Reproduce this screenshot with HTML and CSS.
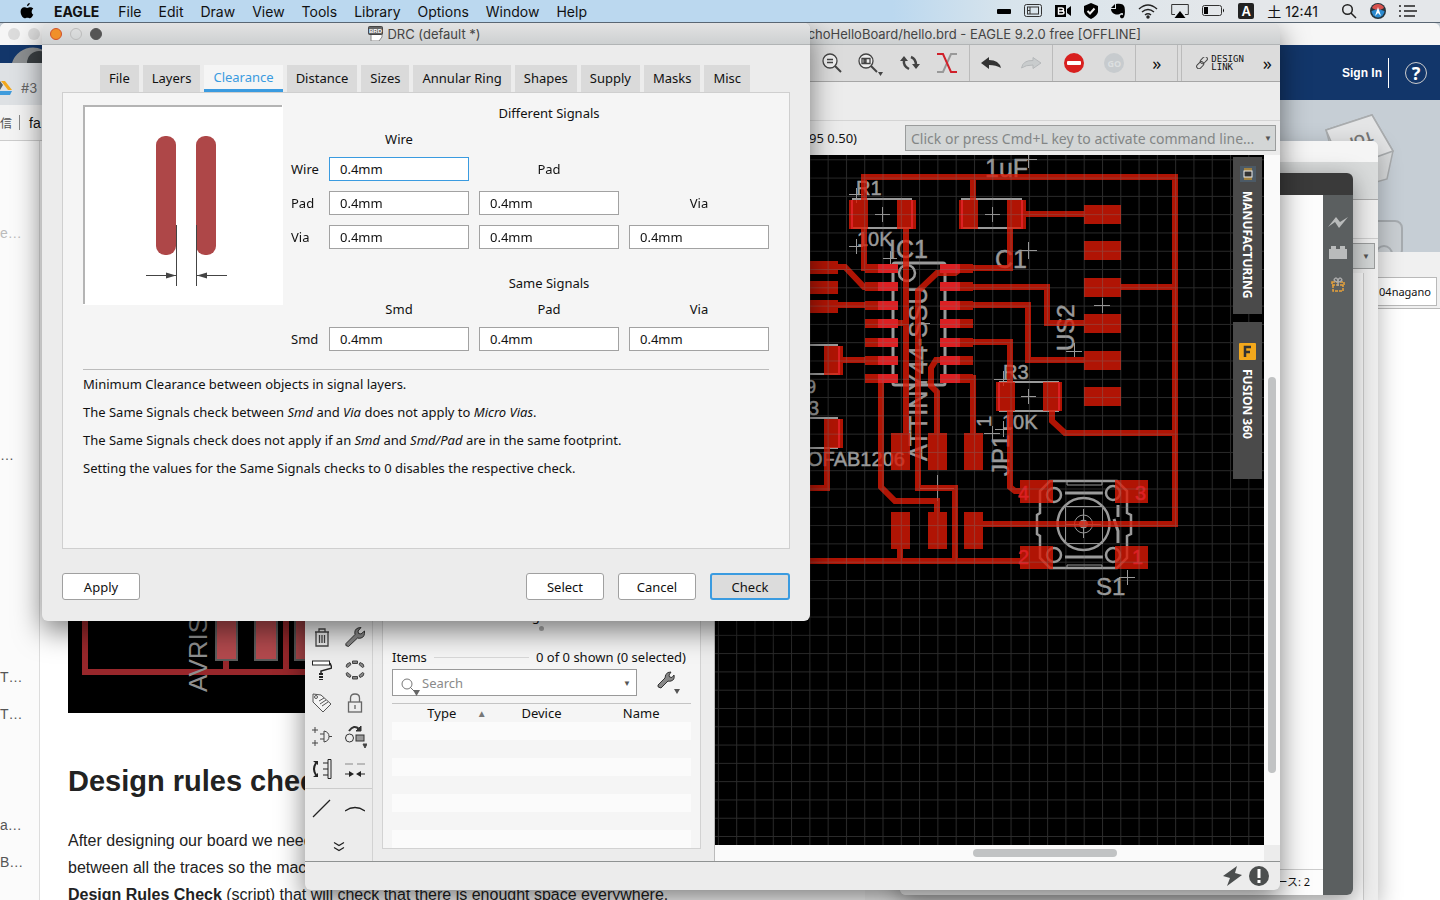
FILE: index.html
```html
<!DOCTYPE html>
<html lang="en">

<head>
    <meta charset="UTF-8">
    <meta name="viewport" content="width=device-width, initial-scale=1.0">
    <title>EAGLE - DRC</title>
    <link rel="stylesheet" href="styles.css">
</head>

<body>
    <div class="desktop">
        <nav class="menubar">
            <div class="menus">
                <svg class="apple" width="14" height="16" viewBox="0 0 14 16"><path d="M9.8 0c.1 1.500-1.200 3.100-2.800 3.200C6.900 1.600 8.300.2 9.800 0zM13.300 11.600c-.7 1.700-1.900 3.700-3.200 3.700-1 0-1.400-.6-2.700-.6s-1.700.6-2.700.6C2.700 15.300.6 11.900.6 8.600c0-2.700 1.700-4.400 3.600-4.400 1.200 0 2 .7 3 .7s1.700-.7 3.300-.7c1 0 2.100.5 2.800 1.500-2.300 1.400-2 4.900 0 5.900z"/></svg>
                <button class="app-name">EAGLE</button>
                <button>File</button>
                <button>Edit</button>
                <button>Draw</button>
                <button>View</button>
                <button>Tools</button>
                <button>Library</button>
                <button>Options</button>
                <button>Window</button>
                <button>Help</button>
            </div>
            <div class="tray">
                <svg width="14" height="16" viewBox="0 0 14 16"><rect y="6" width="14" height="5" rx="1"/></svg>
                <svg width="18" height="16" viewBox="0 0 18 16" fill="none" stroke="#333"><rect x=".5" y="1.500" width="17" height="12" rx="2"/><rect x="3.500" y="4" width="11" height="7"/><path d="M6 4v7M3 7.500h3"/></svg>
                <svg width="16" height="16" viewBox="0 0 16 16"><path d="M0 2h11v12H0zM12 6l4-3v10l-4-3z"/><path d="M3.500 5h3q2 0 2 1.500t-2 1.500h-3zm0 3h3.500q2 0 2 1.500T7 11H3.500z" fill="none" stroke="#fff" stroke-width="1.400"/></svg>
                <svg width="14" height="16" viewBox="0 0 14 16"><path d="M7 0l7 3v6q-1 4-7 7-6-3-7-7V3z"/><path d="M3.500 8l2.500 2.500 4.500-5" fill="none" stroke="#eee" stroke-width="2"/></svg>
                <svg width="14" height="16" viewBox="0 0 14 16"><path d="M0 5l4-4v4zM5 1c4-1 8 0 8.500 3s.8 7-.5 10c-1 2-4 1.500-4-.5s2-2 2.500-1.200c1-1 .5-2.300-.5-2.300-2 0-2 1.500-4 1.500C3 12 0 9 0 6h5z"/></svg>
                <svg width="20" height="16" viewBox="0 0 20 16" fill="none" stroke="#222" stroke-width="1.500"><path d="M1 6q9-8 18 0M4 9q6-5 12 0M7 12q3-2.500 6 0"/><circle cx="10" cy="14" r="1" fill="#222"/></svg>
                <svg width="18" height="16" viewBox="0 0 18 16"><path d="M4 11.500H.7v-10h16.600v10H14" fill="none" stroke="#333"/><path d="M3.500 15L9 8l5.500 7z"/></svg>
                <svg width="23" height="16" viewBox="0 0 23 16"><rect x=".5" y="2.500" width="19" height="10" rx="2" fill="none" stroke="#333"/><rect x="2" y="4" width="4" height="7"/><path d="M21 5.500q2 2 0 4z"/></svg>
                <span class="input-source">A</span>
                <span class="clock"><span lang="ja">土</span> 12:41</span>
                <svg width="16" height="16" viewBox="0 0 16 16" fill="none" stroke="#222" stroke-width="1.500"><circle cx="6.500" cy="6.500" r="4.800"/><path d="M10 10l5 5"/></svg>
                <svg width="16" height="16" viewBox="0 0 16 16"><circle cx="8" cy="8" r="8" fill="#26343c"/><path d="M2 5a6.500 6.500 0 0 1 12 0L8 8z" fill="#d8524e"/><path d="M1.500 8a6.500 6.500 0 0 0 13 0L8 6z" fill="#2c8bd0"/><path d="M5 13l3-9 3 9-3-3z" fill="#fff"/></svg>
                <svg width="18" height="16" viewBox="0 0 18 16" stroke="#222" stroke-width="1.500"><path d="M0 3h2M5 3h11M0 8h2M5 8h13M0 13h2M5 13h11"/></svg>
            </div>
        </nav>

        <!-- 3D modelling window -->
        <section class="window fusion">
            <div class="fusion-title"></div>
            <div class="fusion-bar">
                <a href="#" class="sign-in">Sign In</a>
                <button class="help" aria-label="Help">?</button>
            </div>
            <svg class="view-cube" width="160" height="155" viewBox="1280 100 160 155">
                <path d="M1326 130l46-15 21 36-6 28-28 8-20-10z" fill="#d8dadb" stroke="#a9acae" stroke-width="1.500"/>
                <path d="M1326 130l46-15 21 36-50 18z" fill="#e4e5e6" stroke="#a9acae" stroke-width="1.500"/>
                <text x="1371" y="131" transform="rotate(162 1371 131)" font-size="14" font-weight="bold" fill="#777">TOP</text>
                <rect x="1362" y="221" width="40" height="36" rx="7" fill="#c9ced2" stroke="#a6abaf" stroke-width="2"/>
                <circle cx="1384" cy="254" r="8" fill="none" stroke="#a6abaf" stroke-width="2"/>
            </svg>
        </section>

        <section class="window files">
            <div class="files-tab">.104nagano</div>
            <div class="files-body"></div>
        </section>

        <section class="window schematic">
            <div class="schematic-title"></div>
            <div class="schematic-tools"></div>
            <div class="schematic-row"></div>
            <div class="schematic-command">
                <select aria-label="Schematic command"><option></option></select>
            </div>
            <div class="schematic-body"></div>
        </section>

        <section class="window editor">
            <div class="editor-title"></div>
            <div class="editor-main">
                <div class="editor-page">
                    <div class="editor-status" lang="ja">ース: 2</div>
                </div>
                <div class="editor-side">
                    <svg width="20" height="12" viewBox="0 0 20 12" fill="#b9bbbb"><path d="M0 11L8 1l4 5 8-5-9 11-4-6z"/></svg>
                    <svg width="18" height="13" viewBox="0 0 18 13" fill="#b9bbbb"><path d="M0 3h2V0h5v3h4V0h5v3h2v10H0z"/></svg>
                    <svg width="16" height="16" viewBox="0 0 16 16" fill="none" stroke-width="1.500"><path d="M2 5h12v3H2zM3 8v6h10V8M5 14h6" stroke="#e9a23a" stroke-dasharray="3 1"/><path d="M8 5C5 5 3 3 5 1.500S8 3 8 5c0-2 1-5 3-3.500S11 5 8 5M8 5v4" stroke="#aaa"/></svg>
                </div>
            </div>
        </section>

        <section class="window browser">
            <div class="browser-title"><i></i><i></i></div>
            <div class="browser-strip">
                <svg width="42" height="18" viewBox="0 0 42 18"><path d="M12 18a22 22 0 0 1 42 0z" fill="#8c8f91"/><path d="M27 18a12 12 0 0 1 24 0z" fill="#3b4044"/></svg>
            </div>
            <div class="browser-tabs">
                <svg width="13" height="14" viewBox="0 0 13 14"><path d="M1 0h4l7 9H8z" fill="#f3a81c"/><path d="M0 0l3 4-3 5z" fill="#576066"/><path d="M0 10h12l-2 4H0z" fill="#3e9bdc"/></svg>
                <span>#3</span>
            </div>
            <div class="browser-bookmarks"><span lang="ja">信</span><i></i><a href="#">fa</a></div>
            <div class="browser-main">
                <ul class="toc">
                    <li class="dim"><a href="#">e…</a></li>
                    <li></li><li></li><li></li><li></li><li></li>
                    <li><a href="#">…</a></li>
                    <li></li><li></li><li></li><li></li><li></li>
                    <li><a href="#">T…</a></li>
                    <li><a href="#">T…</a></li>
                    <li></li><li></li>
                    <li><a href="#">a…</a></li>
                    <li><a href="#">B…</a></li>
                </ul>
                <article class="article">
                    <svg class="article-board" width="500" height="572" viewBox="68 141 500 572">
                        <rect x="68" y="141" width="500" height="572"/>
                        <g fill="none" stroke="#98272b" stroke-width="6"><path d="M85 560v112h300M286 560v112M226 650v22"/></g>
                        <g fill="#b2494d" stroke="#5b5b5b" stroke-width="2"><path d="M216 560h21v100h-21zM255 560h22v100h-22zM295 560h22v100h-22z"/></g>
                        <text x="207" y="692" transform="rotate(-90 207 692)" font-size="26" fill="#8f8f8f">AVRISP</text>
                    </svg>
                    <h2>Design rules check</h2>
                    <p>After designing our board we need to check that<br>between all the traces so the machine can mill<br><b>Design Rules Check</b> (script) that will check that there is enought space everywhere.</p>
                </article>
            </div>
        </section>

        <!-- Board editor -->
        <section class="window eagle">
            <header class="titlebar eagle-title">EchoHelloBoard/hello.brd - EAGLE 9.2.0 free [OFFLINE]</header>
            <div class="toolbar">
                <div class="tool-group view-tools">
                    <button aria-label="Zoom out"><svg width="20" height="20" viewBox="0 0 20 20" fill="none" stroke="#444" stroke-width="1.300"><circle cx="8" cy="8" r="7" fill="#eee"/><path d="M5 6.500h6M5 9.500h6"/><path d="M13 13l6 6" stroke-width="2"/></svg></button>
                    <button aria-label="Zoom select"><svg width="26" height="26" viewBox="0 -3 26 26" fill="none" stroke="#444" stroke-width="1.300"><circle cx="8" cy="8" r="7" fill="#eee"/><path d="M4 5.500h8v5H4zM6 7h2v2H6z"/><path d="M13 13l6 6" stroke-width="2"/><path d="M20 19h5l-2.500 4z" fill="#444" stroke="none"/></svg></button>
                    <button aria-label="Redraw"><svg width="20" height="18" viewBox="0 0 20 18" fill="none" stroke="#444" stroke-width="2.500"><path d="M4 6q-1 6 5 9M11 3q5 2 5 8"/><path d="M0 7l4-5 4 5zM12 10h8l-4 5z" fill="#444" stroke="none"/></svg></button>
                    <button aria-label="Ratsnest"><svg width="22" height="22" viewBox="0 0 22 22" fill="none" stroke-width="2"><path d="M1 20h6L15 2h6" stroke="#999"/><path d="M1 2h6l8 18h6" stroke="#d0202a"/></svg></button>
                </div>
                <div class="tool-group">
                    <button aria-label="Undo"><svg width="20" height="12" viewBox="0 0 20 12" fill="#333"><path d="M0 6l8-6v3q10 0 12 8-5-3-12-3v4z"/></svg></button>
                    <button aria-label="Redo"><svg width="20" height="12" viewBox="0 0 20 12" fill="#c9cccd" stroke="#b5b8ba"><path d="M20 6l-8-5.500v3Q2 3 .5 11q4-3 11.500-3v3.500z"/></svg></button>
                </div>
                <div class="tool-group">
                    <button aria-label="Stop"><svg width="20" height="20" viewBox="0 0 20 20"><circle cx="10" cy="10" r="10" fill="#d8201f"/><rect x="3" y="8" width="14" height="4" rx="1" fill="#fff"/></svg></button>
                    <button class="go">GO</button>
                </div>
                <div class="tool-group more"><button>»</button></div>
                <div class="tool-group link">
                    <button class="design-link"><svg width="12" height="12" viewBox="0 0 12 12" fill="none" stroke="#444"><rect x="4.500" y="1" width="8" height="4.500" rx="2.200" transform="rotate(-45 8 4)"/><rect x="0" y="6" width="8" height="4.500" rx="2.200" transform="rotate(-45 4 8)"/></svg><span>DESIGN<br>LINK</span></button>
                    <button>»</button>
                </div>
            </div>
            <div class="parameter-bar"></div>
            <div class="command-bar">
                <span class="coords">95 0.50)</span>
                <select class="command" aria-label="Command line"><option>Click or press Cmd+L key to activate command line...</option></select>
            </div>
            <div class="eagle-main">
                <aside class="palette">
                    <div class="palette-grid">
                        <button aria-label="Delete"><svg width="20" height="20" viewBox="0 0 20 20" fill="none" stroke="#444" stroke-width="1.300"><path d="M3 5h14M7 5V2h6v3M4 5v14h12V5M7.500 8v8M10 8v8M12.500 8v8"/></svg></button>
                        <button aria-label="Properties"><svg width="20" height="20" viewBox="0 0 20 20" fill="#888" stroke="#333"><path d="M1 16.500l9-9q-1-5 3-6.500l3-.5-3 3.500.5 2.500L16 7l3.500-3q.5 6-3.500 7-2 .5-3.500 0l-9 8.500q-4-.5-2.500-3z"/></svg></button>
                        <button aria-label="Paint"><svg width="20" height="20" viewBox="0 0 20 20" fill="none" stroke="#222"><rect x=".5" y="1" width="17" height="4" fill="#fff"/><path d="M18 3l2 5-11 3v2" stroke-width="1.500"/><path d="M9 13v7" stroke-width="4" stroke-dasharray="2 1"/></svg></button>
                        <button aria-label="Group"><svg width="20" height="20" viewBox="0 0 20 20" fill="#888" stroke="#444"><path d="M7.500 1h5v2.500h-5zM7.500 16.500h5V19h-5zM2 4l3-1.500 1 2L2.500 7.500 1 6.500zM18 4l-3-1.500-1 2 3.500 3L19 6.500zM2 16l3 1.500 1-2-3.500-3L1 13.500zM18 16l-3 1.500-1-2 3.500-3 1.500 1z"/></svg></button>
                        <button aria-label="Name"><svg width="20" height="20" viewBox="0 0 20 20" fill="#f4f4f4" stroke="#555"><path d="M1 1l8 1 10 9-8 8L1 9z"/><circle cx="4" cy="4" r="1.500"/><path d="M7 8l5-3M8 11l6-4M10 13l6-4"/></svg></button>
                        <button aria-label="Lock"><svg width="20" height="20" viewBox="0 0 20 20" fill="none" stroke="#666" stroke-width="1.300"><rect x="3.500" y="9" width="13" height="10"/><path d="M5.500 9V5q0-4 4.500-4t4.500 4v4M10 12v4"/></svg></button>
                        <button aria-label="Gate swap"><svg width="20" height="20" viewBox="0 0 20 20" fill="none" stroke="#444"><path d="M0 4h6M3 1v6M0 17h6M3 14v6M12 5v11q5-1 5-5.500T12 5zM8 8h4M8 13h4M17 10.500h3"/></svg></button>
                        <button aria-label="Replace"><svg width="24" height="26" viewBox="-2 -3 24 26" fill="none" stroke="#333"><path d="M4 5q5-7 10-2" stroke-width="2"/><path d="M11 5h5V0z" fill="#333"/><circle cx="4.500" cy="12" r="4"/><rect x="11" y="9" width="8" height="6" fill="#999"/><path d="M18 18h4l-2 4z" fill="#444" stroke="#444"/></svg></button>
                        <button aria-label="Pin swap"><svg width="20" height="20" viewBox="0 0 20 20" fill="none" stroke="#222"><path d="M4 4q-4 6 0 12" stroke-width="2"/><path d="M1 2h5v4zM1 18h5v-4z" fill="#222" stroke="none"/><path d="M16 .5h3v19h-3zM11 4h5M11 10h5M11 16h5"/></svg></button>
                        <button aria-label="Miter"><svg width="20" height="20" viewBox="0 0 20 20" fill="none" stroke="#222"><path d="M0 5h8M12 5h8" stroke="#888"/><path d="M0 15h5M15 15h5"/><path d="M4 12l5 3-5 3zM16 12l-5 3 5 3z" fill="#222" stroke="none"/></svg></button>
                    </div>
                    <div class="palette-grid palette-lines">
                        <button aria-label="Line"><svg width="20" height="20" viewBox="0 0 20 20" stroke="#222" stroke-width="1.300"><path d="M1 18L18 1"/></svg></button>
                        <button aria-label="Arc"><svg width="20" height="20" viewBox="0 0 20 20" fill="none" stroke="#222" stroke-width="1.300"><path d="M0 12q10-7 20 0"/></svg></button>
                    </div>
                    <button class="palette-more" aria-label="More tools"><svg width="12" height="12" viewBox="0 0 12 12" fill="none" stroke="#222" stroke-width="1.300"><path d="M1 1.500l5 3 5-3M1 6.500l5 3 5-3"/></svg></button>
                </aside>
                <aside class="inspector">
                    <div class="inspector-cut"><span>AD1</span><span>g</span><span>0.7 24</span></div>
                    <div class="grip"></div>
                    <div class="items-head"><span>Items</span><hr><span>0 of 0 shown (0 selected)</span></div>
                    <div class="search-row">
                        <div class="search">
                            <svg width="20" height="18" viewBox="0 0 20 18" fill="none" stroke="#777"><circle cx="6" cy="6" r="5"/><path d="M9 9l4 4"/><path d="M12 12h7l-3.500 6z" fill="#666" stroke="none"/></svg>
                            <input type="text" aria-label="Search items" placeholder="Search">
                            <span class="arrow">▼</span>
                        </div>
                        <button aria-label="Item options"><svg width="24" height="24" viewBox="0 0 24 24" fill="#888" stroke="#333"><path d="M1 14l7-7q0-4 3-5.500L14 1l-2 3 .5 2 2.500.5 2-2.500q1 5-3 6-2 .5-3 0l-7 7q-4-.5-3-3z"/><path d="M17 18h6l-3 5z" fill="#555" stroke="none"/></svg></button>
                    </div>
                    <table class="items">
                        <thead><tr><th>Type <i>▲</i></th><th>Device</th><th>Name</th></tr></thead>
                        <tbody>
                            <tr><td colspan="3"></td></tr><tr><td colspan="3"></td></tr><tr><td colspan="3"></td></tr><tr><td colspan="3"></td></tr>
                            <tr><td colspan="3"></td></tr><tr><td colspan="3"></td></tr><tr><td colspan="3"></td></tr>
                        </tbody>
                    </table>
                </aside>
                <div class="board-area">
                    <div class="board-view">
                        <svg class="board" viewBox="715 155 549 690" preserveAspectRatio="xMinYMin slice">
                            <defs>
                                <pattern id="grid" x="717.900" y="159.300" width="18.290" height="18.290" patternUnits="userSpaceOnUse"><path d="M0 .5h19M.5 0v19" stroke="#777" stroke-opacity=".36" fill="none"/></pattern>
                            </defs>
                            <rect x="715" y="155" width="549" height="690"/>
                            <!-- silkscreen -->
                            <g class="silk">
                                <path d="M852 199h60M852 228h60M961 199h61M961 228h61M810 345h28M810 374h28M810 418h28M810 448h28M999 382h60M999 411h60" stroke-width="2"/>
                                <rect x="893" y="263" width="52" height="122" rx="2" stroke-width="3"/>
                                <circle cx="907" cy="273" r="8" stroke-width="2.500"/>
                                <circle cx="1083.500" cy="524" r="26" stroke-width="2.500"/>
                                <circle cx="1083.500" cy="524" r="9"/><circle cx="1083.500" cy="524" r="4" fill="#9a9a9a"/>
                                <rect x="1065.500" y="506.500" width="37" height="37"/>
                                <path d="M1065 493h38M1065 557h38M1118 505v12M1114 519l4 12v12" stroke-width="3"/>
                                <path d="M1050 481h67l10 10v22l4 2v19l-4 2v22l-10 10h-67l-10-10v-22l-3-2v-19l3-2v-22z" stroke-width="2.500"/>
                                <path d="M1067 482v3h35v-3M1067 568v-3h35v3"/>
                                <circle cx="1054" cy="495" r="7" stroke-width="2.500"/><circle cx="1113" cy="493" r="7" stroke-width="2.500"/>
                                <circle cx="1054" cy="555" r="7" stroke-width="2.500"/><circle cx="1113" cy="555" r="7" stroke-width="2.500"/>
                                <path d="M875 214.500h15M882.500 207v15M985 214.500h15M992.500 207v15M1021 396.500h15M1028.500 389v15M849 194.500h14M856.500 188v15M849 246.500h14M856.500 239v15M883 258.500h14M890.500 251v15M1020 159.500h17M1028.500 151v17M1020 250.500h17M1028.500 242v17M1094 305.500h16M1102.500 298v15M1066 351.500h16M1074.500 343v14M920 488.500h34M937.500 475v26M920 323.500h10M994 379.500h16M1003.500 371v15M984 433.500h16M992.500 426v15M995 429.500h16M1003.500 421v16M1119 577.500h16M1127.500 570v15M1066 524.500h35M1083.500 509v29"/>
                                <g class="silk-text">
                                    <text x="985" y="177" font-size="25">1uF</text>
                                    <text x="856" y="195" font-size="20">R1</text>
                                    <text x="857" y="246" font-size="20">10K</text>
                                    <text x="889" y="258" font-size="25">IC1</text>
                                    <text x="995" y="268" font-size="25">C1</text>
                                    <text x="1003" y="379" font-size="20">R3</text>
                                    <text x="1002" y="429" font-size="20">10K</text>
                                    <text x="1096" y="595" font-size="24">S1</text>
                                    <text x="806" y="393" font-size="18">9</text>
                                    <text x="808" y="415" font-size="20">3</text>
                                    <text x="807" y="466" font-size="20">OFAB1206</text>
                                    <text transform="translate(1074 351) rotate(-90)" font-size="24">US2</text>
                                    <text transform="translate(1009 476) rotate(-90)" font-size="24">JP1</text>
                                    <text transform="translate(991 427) rotate(-90)" font-size="20">1</text>
                                    <text transform="translate(927 461) rotate(-90)" font-size="25">ATTINY44-SSU</text>
                                </g>
                            </g>
                            <!-- copper -->
                            <g class="copper">
                                <g class="traces">
                                    <path d="M893 268h-29v-91h311v347H980M973 177v25M906 228v212M1026 214h60M1010 228v40h-50M1120 287h55"/>
                                    <path d="M836 267h9l19 20h5M836 305h32M840 360h28M827 445v43h-17M890 323h16"/>
                                    <path d="M970 287h77v36h38M970 305h58v55h58M970 342h40v145l5 4h8M970 378h3v60M959 270l-4 3h-18l-19 18v197h37v75"/>
                                    <path d="M941 360h-5l-5 8v18l6 6v46M881 378v109l14 14h42v15M900 545v16M810 561h213M1052 408v13l13 12h110"/>
                                </g>
                                <path d="M849 200h19v29h-19zM897 200h19v29h-19zM959 200h19v29h-19zM1007 200h19v29h-19zM996 382h19v29h-19zM1043 382h19v29h-19zM824 346h19v29h-19zM824 419h19v29h-19z"/>
                                <path d="M810 261h28v13h-28zM810 281h28v13h-28zM810 300h28v13h-28zM1084 205h37v19h-37zM1084 241h37v19h-37zM1084 278h37v19h-37zM1084 314h37v19h-37zM1084 351h37v19h-37zM1084 387h37v19h-37z"/>
                                <path d="M891 433h19v37h-19zM928 433h19v37h-19zM964 433h19v37h-19zM891 512h19v37h-19zM928 512h19v37h-19zM964 512h19v37h-19zM1020 480h33v23h-33zM1020 546h33v23h-33zM1115 480h33v23h-33zM1115 546h33v23h-33z"/>
                                <path d="M865 264h33v9h-33zM865 282h33v9h-33zM865 301h33v9h-33zM865 319h33v9h-33zM865 338h33v9h-33zM865 356h33v9h-33zM865 374h33v9h-33zM940 264h33v9h-33zM940 282h33v9h-33zM940 301h33v9h-33zM940 319h33v9h-33zM940 338h33v9h-33zM940 356h33v9h-33zM940 374h33v9h-33z"/>
                            </g>
                            <path d="M878 264h20v9h-20zM878 282h20v9h-20zM878 301h20v9h-20zM878 319h20v9h-20zM878 338h20v9h-20zM878 356h20v9h-20zM878 374h20v9h-20zM940 264h20v9h-20zM940 282h20v9h-20zM940 301h20v9h-20zM940 319h20v9h-20zM940 338h20v9h-20zM940 356h20v9h-20zM940 374h20v9h-20z" fill="#dc2023"/>
                            <path d="M852 200v29M912 200v29M962 200v29M1022 200v29M999 382v29M1059 382v29M839 346v29M839 419v29" stroke="#dc2023" stroke-width="2"/>
                            <g class="pad-names"><text x="1018" y="500">4</text><text x="1135" y="500">3</text><text x="1018" y="564">2</text><text x="1132" y="564">1</text></g>
                            <rect x="715" y="155" width="549" height="690" fill="url(#grid)"/>
                        </svg>
                        <div class="side-tabs">
                            <button class="side-tab"><svg width="16" height="16" viewBox="0 0 16 16"><rect width="16" height="16" fill="#4c5a66"/><path d="M5 2v12M7 2v12M9 2v12M11 2v12" stroke="#f3a81c"/><rect x="4" y="5" width="8" height="6" fill="#333" stroke="#eee"/></svg><span>MANUFACTURING</span></button>
                            <button class="side-tab"><svg width="17" height="17" viewBox="0 0 17 17"><rect width="17" height="17" rx="1" fill="#f3a81c"/><path d="M6 14V4h6M6 9h5" fill="none" stroke="#333" stroke-width="2.500"/></svg><span>FUSION 360</span></button>
                        </div>
                        <div class="vscroll"><i></i></div>
                    </div>
                    <div class="hscroll"><i></i></div>
                </div>
            </div>
            <footer class="statusbar">
                <svg width="20" height="20" viewBox="0 0 20 20" fill="#4b4e4e"><path d="M14 0L0 10l7 2-3 8L19 9l-7-2z"/></svg>
                <svg width="20" height="20" viewBox="0 0 20 20"><circle cx="10" cy="10" r="10" fill="#4b4e4e"/><path d="M10 3v9M10 14v3" stroke="#fff" stroke-width="3"/></svg>
            </footer>
        </section>

        <!-- Design rule check dialog -->
        <section class="window dialog">
            <header class="titlebar dialog-title">
                <div class="lights"><i class="close"></i><i class="min"></i><i class="max"></i></div>
                <div class="dialog-name">
                    <svg width="16" height="15" viewBox="0 0 16 15"><path d="M3 6h11v5l-3 4H3z" fill="#fff" stroke="#888"/><rect x=".5" y=".5" width="14" height="8" rx="1" fill="#666" stroke="#444"/><text x="1" y="7" font-size="6" font-weight="bold" fill="#fff">BRD</text></svg>
                    <span>DRC (default *)</span>
                </div>
            </header>
            <form class="dialog-body">
                <div class="tabs">
                    <button type="button">File</button>
                    <button type="button">Layers</button>
                    <button type="button" class="active">Clearance</button>
                    <button type="button">Distance</button>
                    <button type="button">Sizes</button>
                    <button type="button">Annular Ring</button>
                    <button type="button">Shapes</button>
                    <button type="button">Supply</button>
                    <button type="button">Masks</button>
                    <button type="button">Misc</button>
                </div>
                <div class="pane">
                    <div class="clearance">
                        <svg class="preview" width="200" height="200" viewBox="83 105 200 200">
                            <rect x="83" y="105" width="200" height="200" fill="#fff"/>
                            <path d="M84 304V106h198" fill="none" stroke="#b4b4b4" stroke-width="2"/>
                            <rect x="156" y="136" width="20" height="119" rx="9" fill="#ae4748"/>
                            <rect x="196" y="136" width="20" height="119" rx="9" fill="#ae4748"/>
                            <path d="M176.500 225v61M196.500 225v61M146 275.500h30M197 275.500h30" stroke="#444"/>
                            <path d="M166 272.500l10 3-10 3zM207 272.500l-10 3 10 3z" fill="#444"/>
                        </svg>
                        <div class="signals">
                            <h3>Different Signals</h3>
                            <span class="col-label first-col">Wire</span>
                            <label class="row-label" for="wire-wire">Wire</label>
                            <input id="wire-wire" class="focused" type="text" value="0.4mm" autofocus>
                            <span class="col-label">Pad</span>
                            <label class="row-label" for="pad-wire">Pad</label>
                            <input id="pad-wire" type="text" value="0.4mm">
                            <input aria-label="Pad to pad" type="text" value="0.4mm">
                            <span class="col-label">Via</span>
                            <label class="row-label" for="via-wire">Via</label>
                            <input id="via-wire" type="text" value="0.4mm">
                            <input aria-label="Via to pad" type="text" value="0.4mm">
                            <input aria-label="Via to via" type="text" value="0.4mm">
                            <h3 class="same">Same Signals</h3>
                            <span class="col-label first-col">Smd</span>
                            <span class="col-label">Pad</span>
                            <span class="col-label">Via</span>
                            <label class="row-label" for="smd-smd">Smd</label>
                            <input id="smd-smd" type="text" value="0.4mm">
                            <input aria-label="Smd to pad" type="text" value="0.4mm">
                            <input aria-label="Smd to via" type="text" value="0.4mm">
                        </div>
                    </div>
                    <div class="notes">
                        <p>Minimum Clearance between objects in signal layers.</p>
                        <p>The Same Signals check between <em>Smd</em> and <em>Via</em> does not apply to <em>Micro Vias</em>.</p>
                        <p>The Same Signals check does not apply if an <em>Smd</em> and <em>Smd/Pad</em> are in the same footprint.</p>
                        <p>Setting the values for the Same Signals checks to 0 disables the respective check.</p>
                    </div>
                </div>
                <div class="actions">
                    <button type="button" class="apply">Apply</button>
                    <button type="button">Select</button>
                    <button type="button">Cancel</button>
                    <button type="button" class="primary">Check</button>
                </div>
            </form>
        </section>
    </div>
</body>

</html>
```
FILE: styles.css
```css
* {
    margin: 0;
    padding: 0;
    box-sizing: border-box;
}

body {
    font-family: "Noto Sans", sans-serif;
    font-size: 13px;
    color: #111;
}

button,
input,
select {
    font: inherit;
    color: inherit;
    border: none;
    background: none;
    border-radius: 0;
    outline: none;
}

a {
    color: inherit;
    text-decoration: none;
}

svg {
    display: block;
    flex: none;
}

.desktop {
    position: relative;
    height: 100vh;
    overflow: hidden;
    background: #c5cdd4;
}

/* Menu bar */

.menubar {
    position: relative;
    z-index: 10;
    display: flex;
    justify-content: space-between;
    height: 23px;
    padding: 0 23px 0 20px;
    border-bottom: 1px solid #596673;
    background: linear-gradient(90deg, #bbd8ef 62%, #d8e4ec 70%, #e4e7ea 85%);
    font-family: Inter, sans-serif;
    font-size: 14px;
}

.menus,
.tray {
    display: flex;
    align-items: center;
    white-space: nowrap;
}

.menus {
    gap: 17px;
}

.app-name {
    margin: 0 2px 0 3px;
    font-weight: 700;
}

.tray {
    gap: 13px;
}

.input-source {
    width: 16px;
    height: 16px;
    border-radius: 2px;
    background: #222;
    color: #fff;
    font-size: 13px;
    font-weight: 600;
    line-height: 16px;
    text-align: center;
}

.clock {
    padding: 0 10px 0 0;
}

[lang="ja"] {
    font-family: "Noto Sans", "Noto Sans CJK JP", sans-serif;
}

.window {
    position: absolute;
    overflow: hidden;
    display: flex;
    flex-direction: column;
}

.titlebar {
    display: flex;
    align-items: center;
    height: 22px;
    flex: none;
    border-bottom: 1px solid #b1b4b5;
    background: linear-gradient(#e3e3e3, #cdd0d1);
    font-family: Inter, sans-serif;
    font-size: 13px;
    color: #444;
}

/* Windows at the back */

.fusion {
    top: 23px;
    right: 0;
    bottom: 0;
    left: 865px;
    border-radius: 0 6px 0 0;
    background: #c6ced5;
}

.fusion-title {
    height: 22px;
    background: #f6f6f6;
}

.fusion-bar {
    display: flex;
    justify-content: flex-end;
    align-items: center;
    height: 55px;
    padding-right: 13px;
    background: #12366a;
    color: #fff;
}

.sign-in {
    padding: 5px 6px 5px 0;
    border-right: 1px solid #fff;
    font-family: "Liberation Sans", sans-serif;
    font-size: 12px;
    font-weight: 700;
    line-height: 20px;
}

.help {
    width: 22px;
    height: 22px;
    margin-left: 16px;
    border: 1px solid #ccc;
    border-radius: 50%;
    font-size: 18px;
    font-weight: 700;
    line-height: 20px;
}

.view-cube {
    align-self: flex-end;
    font-family: "Liberation Sans", sans-serif;
}

.files {
    top: 252px;
    right: 0;
    bottom: 0;
    left: 1270px;
    padding-top: 25px;
    background: #f0f0f0;
}

.files-tab {
    width: 167px;
    height: 29px;
    padding-right: 5px;
    border: 1px solid #b9b9b9;
    background: #fff;
    font-size: 11px;
    line-height: 28px;
    text-align: right;
}

.files-body {
    flex: 1;
    margin-top: 2px;
    border-top: 1px solid #b9b9b9;
    background: #fff;
}

.schematic {
    top: 141px;
    right: 62px;
    bottom: 0;
    left: 865px;
    border-radius: 6px 6px 0 0;
    background: #eee;
    box-shadow: 0 8px 24px rgba(0, 0, 0, .3);
}

.schematic-title {
    height: 21px;
    background: #f5f5f5;
}

.schematic-tools {
    height: 38px;
    border-bottom: 1px solid #aaa;
    background: #d9dbdb;
}

.schematic-row {
    height: 39px;
    border-bottom: 1px solid #ccc;
}

.schematic-command {
    display: flex;
    justify-content: flex-end;
    padding: 4px 3px;
}

.schematic-command select,
.command {
    appearance: none;
    border: 1px solid #9a9c9c;
    background: #d3d6d6;
}

.schematic-command select {
    width: 200px;
    height: 26px;
}

.schematic-command,
.command-bar {
    position: relative;
}

.schematic-command::after,
.command-bar::after {
    content: "▼";
    position: absolute;
    top: 11px;
    right: 8px;
    font-size: 8px;
    line-height: 12px;
    color: #555;
}

.schematic-body {
    flex: 1;
    margin-right: 14px;
    border-right: 1px solid #ccc;
    background: #f8f8f8;
}

.editor {
    top: 173px;
    right: 87px;
    bottom: 5px;
    left: 900px;
    border-radius: 6px;
    box-shadow: 0 6px 24px rgba(0, 0, 0, .4);
}

.editor-title {
    height: 22px;
    background: #3a3a3a;
}

.editor-main {
    display: flex;
    flex: 1;
}

.editor-page {
    flex: 1;
    display: flex;
    flex-direction: column;
    justify-content: flex-end;
    background: #fdfdfd;
}

.editor-status {
    height: 26px;
    padding-right: 13px;
    border-top: 1px solid #ccc;
    font-size: 11px;
    line-height: 24px;
    text-align: right;
}

.editor-side {
    display: flex;
    flex-direction: column;
    align-items: center;
    gap: 18px;
    width: 30px;
    padding-top: 21px;
    background: #5b5f60;
}

/* Web browser */

.browser {
    top: 23px;
    bottom: 0;
    left: 0;
    width: 865px;
    border-radius: 6px 0 0 0;
    background: #fff;
}

.browser-title {
    display: flex;
    align-items: center;
    gap: 8px;
    height: 22px;
    flex: none;
    padding-left: 8px;
    background: #f6f6f6;
}

.browser-title i {
    width: 12px;
    height: 12px;
    border-radius: 50%;
    background: #dcdcdc;
}

.browser-strip {
    height: 18px;
    flex: none;
    background: #12366a;
}

.browser-tabs {
    display: flex;
    align-items: center;
    gap: 8px;
    height: 42px;
    flex: none;
    padding-top: 8px;
    background: #dee1e4;
    font-family: Inter, sans-serif;
    font-size: 13px;
    color: #666;
}

.browser-bookmarks {
    display: flex;
    align-items: center;
    height: 36px;
    flex: none;
    border-bottom: 1px solid #ccc;
    background: #f3f3f3;
    font-family: "Liberation Sans", sans-serif;
    font-size: 14px;
}

.browser-bookmarks span {
    font-size: 12px;
    color: #555;
}

.browser-bookmarks i {
    width: 1px;
    height: 15px;
    margin: 0 9px 0 7px;
    background: #888;
}

.browser-main {
    display: flex;
    flex: 1;
    min-height: 0;
}

.toc {
    width: 40px;
    flex: none;
    padding-top: 74px;
    border-right: 1px solid #ddd;
    list-style: none;
    background: #fbfbfb;
    font-family: "Liberation Sans", sans-serif;
    font-size: 14px;
    line-height: 37px;
    color: #555;
}

.toc li {
    height: 37px;
}

.toc .dim {
    color: #bbb;
}

.article {
    padding-left: 28px;
    font-family: "Liberation Sans", sans-serif;
    white-space: nowrap;
    color: #222;
}

.article h2 {
    margin-top: 48px;
    font-size: 29px;
    line-height: 40px;
}

.article p {
    margin-top: 26px;
    font-size: 16px;
    line-height: 27px;
}

/* Board editor */

.eagle {
    top: 23px;
    left: 305px;
    right: 160px;
    bottom: 10px;
    border-radius: 6px;
    background: #ececec;
    box-shadow: 0 10px 28px rgba(0, 0, 0, .5);
}

.eagle-title {
    justify-content: flex-end;
    padding-right: 139px;
}

.toolbar {
    display: flex;
    justify-content: flex-end;
    height: 37px;
    flex: none;
    border-bottom: 1px solid #a6a6a6;
    background: #dcdcdc;
}

.toolbar button {
    display: flex;
    align-items: center;
    justify-content: center;
}

.tool-group {
    display: flex;
    align-items: center;
    gap: 20px;
    padding: 0 11px;
    border-right: 1px solid #bbb;
    font-size: 18px;
}

.tool-group.view-tools {
    gap: 16px;
}

.tool-group.more {
    width: 42px;
    justify-content: center;
    margin-right: 3px;
}

.tool-group.link {
    gap: 19px;
    padding: 0 8px 0 14px;
    border-right: none;
    border-left: 1px solid #bbb;
}

.toolbar .go {
    width: 20px;
    height: 20px;
    border-radius: 50%;
    background: #c7cbce;
    color: #dcdfe0;
    font-size: 9px;
    font-weight: 700;
}

.toolbar .design-link {
    gap: 3px;
    font-family: "DejaVu Sans Mono", monospace;
    font-size: 9px;
    line-height: 8px;
    text-align: left;
}

.parameter-bar {
    height: 39px;
    flex: none;
    border-bottom: 1px solid #d4d4d4;
}

.command-bar {
    display: flex;
    align-items: center;
    justify-content: flex-end;
    gap: 48px;
    height: 34px;
    flex: none;
    padding-right: 4px;
}

.command {
    width: 371px;
    height: 26px;
    padding-left: 5px;
    font-size: 14px;
    color: #838686;
}

.eagle-main {
    display: flex;
    flex: 1;
    min-height: 0;
}

.palette {
    display: flex;
    flex-direction: column;
    justify-content: flex-end;
    width: 68px;
    flex: none;
    padding-bottom: 6px;
    border-right: 1px solid #d2d2d2;
}

.palette-grid {
    display: grid;
    grid-template-columns: 33px 33px;
    grid-auto-rows: 33px;
}

.palette-grid button {
    display: flex;
    align-items: center;
    justify-content: center;
}

.palette-lines {
    margin-top: 3px;
    padding-top: 3px;
    border-top: 1px solid #ccc;
}

.palette-more {
    align-self: center;
    padding: 16px 0 2px;
}

.inspector {
    display: flex;
    flex-direction: column;
    justify-content: flex-end;
    width: 319px;
    flex: none;
    margin: 0 13px 12px 9px;
    padding: 0 9px;
    border: 1px solid #d2d2d2;
    background: #f5f5f5;
}

.inspector-cut {
    display: flex;
    justify-content: space-between;
    padding: 0 5px;
    line-height: 18px;
}

.grip {
    width: 5px;
    height: 5px;
    margin: 1px auto 16px;
    border-radius: 50%;
    background: #aaa;
}

.items-head {
    display: flex;
    align-items: center;
    padding-right: 5px;
    line-height: 20px;
}

.items-head hr {
    flex: 1;
    margin: 0 7px;
    border: none;
    border-top: 1px solid #d8d8d8;
}

.search-row {
    display: flex;
    gap: 20px;
    margin: 2px 0 7px;
}

.search {
    display: flex;
    align-items: center;
    width: 245px;
    height: 27px;
    padding: 0 5px 0 8px;
    border: 1px solid #999;
    background: #fff;
}

.search svg {
    margin-top: 8px;
}

.search input {
    flex: 1;
    min-width: 0;
    padding-left: 1px;
}

.search input::placeholder {
    color: #8a8a8a;
}

.arrow {
    font-size: 8px;
    color: #555;
}

.items {
    width: 100%;
    border-collapse: collapse;
    border-top: 1px solid #c4c4c4;
    table-layout: fixed;
}

.items th {
    position: relative;
    height: 18px;
    font-weight: 400;
    line-height: 18px;
}

.items i {
    position: absolute;
    top: 0;
    right: 5px;
    font-size: 10px;
    font-style: normal;
    color: #777;
}

.items td {
    height: 18px;
}

.items tbody tr:nth-child(odd) {
    background: #fbfbfb;
}

.board-area {
    display: flex;
    flex-direction: column;
    flex: 1;
    min-width: 0;
    border-left: 1px solid #bbb;
}

.board-view {
    display: flex;
    flex: 1;
    position: relative;
    min-height: 0;
}

.board {
    flex: 1;
    min-width: 0;
    height: 100%;
    font-family: "Liberation Sans", sans-serif;
}

.silk {
    fill: none;
    stroke: #9a9a9a;
}

.silk-text {
    fill: #9a9a9a;
    stroke-width: .5;
}

.copper {
    fill: #dc1a06;
    opacity: .8;
}

.traces {
    fill: none;
    stroke: #dc1a06;
    stroke-width: 6;
}

.pad-names {
    fill: #dc2023;
    stroke: #dc2023;
    stroke-width: .5;
    font-size: 20px;
}

.side-tabs {
    position: absolute;
    top: 2px;
    right: 18px;
    display: flex;
    flex-direction: column;
    gap: 8px;
}

.side-tab {
    display: flex;
    flex-direction: column;
    align-items: center;
    gap: 9px;
    width: 29px;
    height: 157px;
    padding-top: 9px;
    background: #4a4a4a;
    color: #fff;
    font-size: 12px;
    font-weight: 700;
}

.side-tab + .side-tab {
    padding-top: 21px;
}

.side-tab span {
    writing-mode: vertical-rl;
}

.vscroll {
    width: 16px;
    padding: 222px 4px 72px;
    background: #fafafa;
}

.vscroll i,
.hscroll i {
    display: block;
    height: 100%;
    border-radius: 4px;
    background: #c1c3c4;
}

.hscroll {
    height: 16px;
    flex: none;
    margin-right: 16px;
    padding: 4px 147px 4px 258px;
    background: #fafafa;
}

.statusbar {
    display: flex;
    justify-content: flex-end;
    align-items: center;
    gap: 6px;
    height: 29px;
    flex: none;
    padding-right: 11px;
    border-top: 1px solid #8f9292;
}

/* DRC dialog */

.dialog {
    top: 23px;
    left: 42px;
    width: 768px;
    border-radius: 6px;
    background: #ececec;
    box-shadow: 0 10px 28px rgba(0, 0, 0, .5);
}

.dialog-title {
    padding: 0 8px;
}

.lights {
    display: flex;
    gap: 8px;
}

.lights i {
    width: 12px;
    height: 12px;
    border: 1px solid #bbb;
    border-radius: 50%;
}

.lights .close {
    border-color: #d0502a;
    background: #f0902a;
}

.lights .max {
    border-color: #555;
    background: #555;
}

.dialog-name {
    display: flex;
    align-items: center;
    justify-content: center;
    flex: 1;
    gap: 3px;
    padding-right: 55px;
}

.dialog-name svg {
    font-family: "Liberation Sans", sans-serif;
}

.dialog-body {
    padding: 20px 20px 21px;
}

.tabs {
    display: flex;
    justify-content: center;
    gap: 4px;
    padding-right: 2px;
}

.tabs button {
    height: 27px;
    padding: 0 9px 2px;
    background: #dadada;
    white-space: nowrap;
}

.tabs .active {
    padding-bottom: 0;
    border-bottom: 3px solid #3a9be0;
    background: #f5f5f5;
    color: #3a9be0;
}

.pane {
    height: 457px;
    padding: 12px 20px;
    border: 1px solid #cfcfcf;
    background: #f5f5f5;
}

.clearance {
    display: flex;
    gap: 8px;
}

.signals {
    display: grid;
    grid-template-columns: 28px 1fr 1fr 1fr;
    gap: 10px;
    align-content: start;
    flex: 1;
}

.signals h3 {
    grid-column: 2 / 5;
    font-size: 13px;
    font-weight: 400;
    line-height: 16px;
    text-align: center;
}

.signals .same {
    margin-top: 16px;
}

.col-label {
    align-self: center;
    line-height: 16px;
    text-align: center;
}

.first-col {
    grid-column: 2;
}

.row-label {
    grid-column: 1;
    line-height: 24px;
    white-space: nowrap;
}

.signals input {
    min-width: 0;
    height: 24px;
    padding: 0 10px;
    border: 1px solid #a2a2a2;
    background: #fff;
}

.signals .focused {
    border-color: #3a9be0;
}

.notes {
    margin-top: 18px;
    border-top: 1px solid #bcbcbc;
}

.notes p {
    line-height: 28px;
    white-space: nowrap;
}

.actions {
    display: flex;
    gap: 14px;
    padding-top: 24px;
}

.actions button {
    min-width: 78px;
    height: 27px;
    border: 1px solid #a0a0a0;
    border-radius: 3px;
    background: #fff;
}

.actions .apply {
    margin-right: auto;
}

.actions .primary {
    min-width: 80px;
    border: 2px solid #3a9be0;
    background: #dcdcdc;
}
```
